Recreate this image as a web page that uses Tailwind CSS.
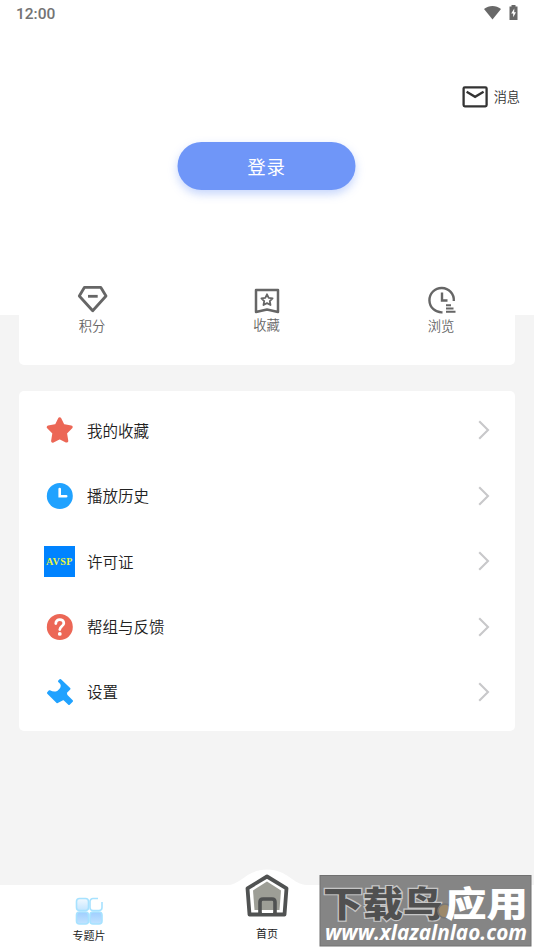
<!DOCTYPE html>
<html lang="zh-CN">
<head>
<meta charset="utf-8">
<title>我的</title>
<script src="https://cdn.jsdelivr.net/npm/@tailwindcss/browser@4"></script>
</head>
<body class="bg-[#f4f4f4] font-['Noto_Sans_CJK_SC',sans-serif]">
<div class="relative flex h-[950px] w-[534px] flex-col overflow-hidden bg-[#f4f4f4]">
  <header class="flex h-[315px] shrink-0 flex-col bg-white">
    <div class="flex h-7 items-center justify-between pl-4 pr-[16px] text-[#686868]">
      <span class="font-['Roboto',sans-serif] text-[15.500px] font-medium leading-7 text-[#737373]">12:00</span>
      <div class="flex items-start gap-2 pb-[3px]">
        <svg class="mt-px h-[14px] w-[17px]" viewBox="0 0 17 14" fill="#686868"><path d="M0 3C5-1 12-1 17 3L8.500 13.500Z"/></svg>
        <svg class="h-[15px] w-[9px]" viewBox="0 0 9 15"><path d="M2.500 1.500V0h4v1.500H8.500V15H.5V1.500Z" fill="#686868"/><path d="M5.300 3.500 2.200 8.500H4.200V12.300L7 7.300H5.200Z" fill="white"/></svg>
      </div>
    </div>
    <div class="mt-[55px] flex h-7 items-center justify-end gap-[6px] pr-[14px]">
      <svg class="h-[22px] w-[26px]" viewBox="0 0 26 22" fill="none" stroke="#333" stroke-width="2.300"><rect x="1.600" y="1.300" width="23" height="19" rx="1.200"/><path d="m4.600 5.800 8.500 5 8.500-5"/></svg>
      <span class="text-[13.200px] font-[350] leading-5 text-[#333]">消息</span>
    </div>
    <button class="mx-auto mt-[31px] flex h-12 w-[178px] -translate-x-[0.5px] items-center justify-center rounded-full bg-[#6f96f8] pt-[2px] text-[18.500px] tracking-[0.700px] text-white shadow-[0_4px_10px_rgba(111,150,248,0.4)]">登录</button>
  </header>

  <section class="relative mx-[19px] -mt-[54px] flex h-[104px] shrink-0 justify-between rounded-b-[5px] bg-white pl-[43px] pr-[44px] pt-[22px] text-[13.300px] font-[350] leading-5 text-[#666]">
    <div class="flex w-[60px] flex-col items-center gap-[2px]">
      <svg class="h-[31px] w-[32px]" viewBox="0 0 32 31" fill="none" stroke="#666" stroke-width="2.800" stroke-linejoin="round"><path d="M8.500 4.300H24.700L30 13 16.700 27.800 3.300 13Z"/><path d="M12 13.300h9.700"/></svg>
      <span>积分</span>
    </div>
    <div class="flex w-[60px] flex-col items-center gap-px">
      <svg class="h-[31px] w-[28px]" viewBox="0 0 28 31" fill="none" stroke="#666" stroke-width="2.500" stroke-linejoin="round"><path d="M3 7H25V29L14 26.500 3 29Z"/><path stroke-width="1.800" d="m14 11.300 1.700 3.500 3.900.6-2.800 2.700.7 3.900-3.500-1.900-3.500 1.900.7-3.900-2.800-2.700 3.900-.6Z"/></svg>
      <span>收藏</span>
    </div>
    <div class="flex w-[60px] flex-col items-center gap-[2px]">
      <svg class="h-[31px] w-[32px]" viewBox="0 0 32 31" fill="none" stroke="#666" stroke-width="2.400"><path d="M17.500 29.300A12.200 12.200 0 1 1 28.800 18"/><path d="M17 9.500v8h5.500" stroke-width="2.400"/><path d="M21 22.300h5M21 25.500h7.500M21 28.800h9.500" stroke-width="2"/></svg>
      <span>浏览</span>
    </div>
  </section>

  <ul class="mx-[19px] mt-[26px] flex h-[340px] shrink-0 flex-col rounded-[5px] bg-white pl-[25px] pr-[25px] pt-[6.700px] text-[15.500px] font-[350] text-[#222]">
    <li class="flex h-[65.400px] items-center gap-3">
      <svg class="h-8 w-[31px]" viewBox="0 0 31 32"><path d="M15.700 5 19 11.800l8 1.300-5.700 5.800 1.300 8-6.900-3.400-6.900 3.400 1.300-8L4.400 13.100 12.400 11.800Z" fill="#ec6756" stroke="#ec6756" stroke-width="3.400" stroke-linejoin="round"/></svg>
      <span class="grow">我的收藏</span>
      <svg class="h-5 w-3" viewBox="0 0 12 20" fill="none" stroke="#c8c8ca" stroke-width="2.100"><path d="m1.200 1.200 8.800 8.800-8.800 8.800"/></svg>
    </li>
    <li class="flex h-[65.400px] items-center gap-3">
      <svg class="h-8 w-[31px]" viewBox="0 0 31 32"><circle cx="15.800" cy="16" r="13" fill="#20a2ff"/><path d="M15.700 9v7.200h6.500" fill="none" stroke="white" stroke-width="2.600" stroke-linecap="round"/></svg>
      <span class="grow">播放历史</span>
      <svg class="h-5 w-3" viewBox="0 0 12 20" fill="none" stroke="#c8c8ca" stroke-width="2.100"><path d="m1.200 1.200 8.800 8.800-8.800 8.800"/></svg>
    </li>
    <li class="flex h-[65.400px] items-center gap-3">
      <span class="flex h-[31px] w-[31px] items-center justify-center bg-[#0083ff] font-['Liberation_Serif',serif] text-[10px] font-bold tracking-[0.500px] text-[#e9f542]">AVSP</span>
      <span class="grow">许可证</span>
      <svg class="h-5 w-3" viewBox="0 0 12 20" fill="none" stroke="#c8c8ca" stroke-width="2.100"><path d="m1.200 1.200 8.800 8.800-8.800 8.800"/></svg>
    </li>
    <li class="flex h-[65.400px] items-center gap-3">
      <svg class="h-8 w-[31px]" viewBox="0 0 31 32"><circle cx="15.800" cy="16" r="13" fill="#ec6756"/><path d="M11.800 12.500c0-5.200 8-5.200 8-.3 0 3-4 3.100-4 6.300" fill="none" stroke="white" stroke-width="2.800" stroke-linecap="round"/><circle cx="15.800" cy="22.900" r="1.900" fill="white"/></svg>
      <span class="grow">帮组与反馈</span>
      <svg class="h-5 w-3" viewBox="0 0 12 20" fill="none" stroke="#c8c8ca" stroke-width="2.100"><path d="m1.200 1.200 8.800 8.800-8.800 8.800"/></svg>
    </li>
    <li class="flex h-[65.400px] items-center gap-3">
      <svg class="h-8 w-[31px]" viewBox="0 0 31 32"><path d="M16.300 4 25.500 12.700 21.800 16.500 22.500 19.500 28 25 25 28 19.500 22.800 13.300 26.200 4 17 5.500 15.200C8 16.500 11 17.500 14 15.500 17.500 13 18.300 9.500 17 7.300L15 5.300Z" fill="#20a2ff" stroke="#20a2ff" stroke-width="2" stroke-linejoin="round"/></svg>
      <span class="grow">设置</span>
      <svg class="h-5 w-3" viewBox="0 0 12 20" fill="none" stroke="#c8c8ca" stroke-width="2.100"><path d="m1.200 1.200 8.800 8.800-8.800 8.800"/></svg>
    </li>
  </ul>

  <nav class="mt-auto grid h-[65px] shrink-0 grid-cols-3 bg-white text-[11px] leading-4 text-[#222]">
    <div class="flex flex-col items-center pt-[12px]">
      <svg class="-ml-px h-[28px] w-[28px]" viewBox="0 0 28 28" stroke="#a7e2ff" stroke-width="1.600">
        <defs><linearGradient id="tile" x2="0" y2="1"><stop stop-color="#f2f9ff"/><stop offset="1" stop-color="#c3e5ff"/></linearGradient><linearGradient id="tileDeep" x2="0" y2="1"><stop stop-color="#9fceff"/><stop offset="1" stop-color="#c1e3ff"/></linearGradient></defs>
        <rect x="1.500" y="1.500" width="12" height="12" rx="3" fill="url(#tile)"/>
        <path d="M23 1.500H18a3 3 0 0 0-3 3v6a3 3 0 0 0 3 3h6a3 3 0 0 0 3-3V5" fill="white"/>
        <rect x="1.500" y="15" width="12" height="12" rx="3" fill="url(#tileDeep)"/><rect x="15" y="15" width="12" height="12" rx="3" fill="url(#tileDeep)"/>
      </svg>
      <span class="mt-[2px]">专题片</span>
    </div>
    <div class="flex flex-col items-center">
      <svg class="-mt-[17px] h-[57px] w-[80px] shrink-0" viewBox="0 0 80 57">
        <path d="M0 17C14 17 19 1.500 40 1.500S66 17 80 17V57H0Z" fill="white"/>
        <path d="M40 13.500 54 22.500 52.500 42H27.500L26 22.500Z" fill="#9d9e96"/>
        <path d="M40 8.500 59.500 20.300 57.500 46.500H22.500L20.500 20.300Z" fill="none" stroke="#505252" stroke-width="3.800" stroke-linejoin="round"/>
        <path d="M33 46V34q0-3 3-3H45q3 0 3 3v12" fill="none" stroke="#505252" stroke-width="3.600"/><path d="M35 42h11v3H35Z" fill="white"/>
      </svg>
      <span>首页</span>
    </div>
    <div></div>
  </nav>

  <svg class="absolute left-[319px] top-[875px] h-[72px] w-[213px] overflow-visible" viewBox="0 0 213 72">
    <rect x="1" y=".5" width="211" height="70.500" fill="#858585" stroke="#707070"/>
    <g class="font-['Noto_Sans_CJK_SC',sans-serif] font-black" font-size="35">
      <text x="4" y="42" textLength="120" lengthAdjust="spacingAndGlyphs" fill="#505050" stroke="#c6c6c6" stroke-width="2.400" paint-order="stroke">下载鸟</text>
      <circle cx="126" cy="36" r="7" fill="#9c896b" stroke="#777" stroke-width="1.500"/>
      <text x="126" y="42" textLength="83" lengthAdjust="spacingAndGlyphs" fill="white">应用</text>
    </g>
    <text class="font-['Open_Sans',sans-serif] font-bold italic" x="6" y="64.500" font-size="22" textLength="202" lengthAdjust="spacingAndGlyphs" fill="white">www.xlazalnlao.com</text>
  </svg>
</div>
</body>
</html>
